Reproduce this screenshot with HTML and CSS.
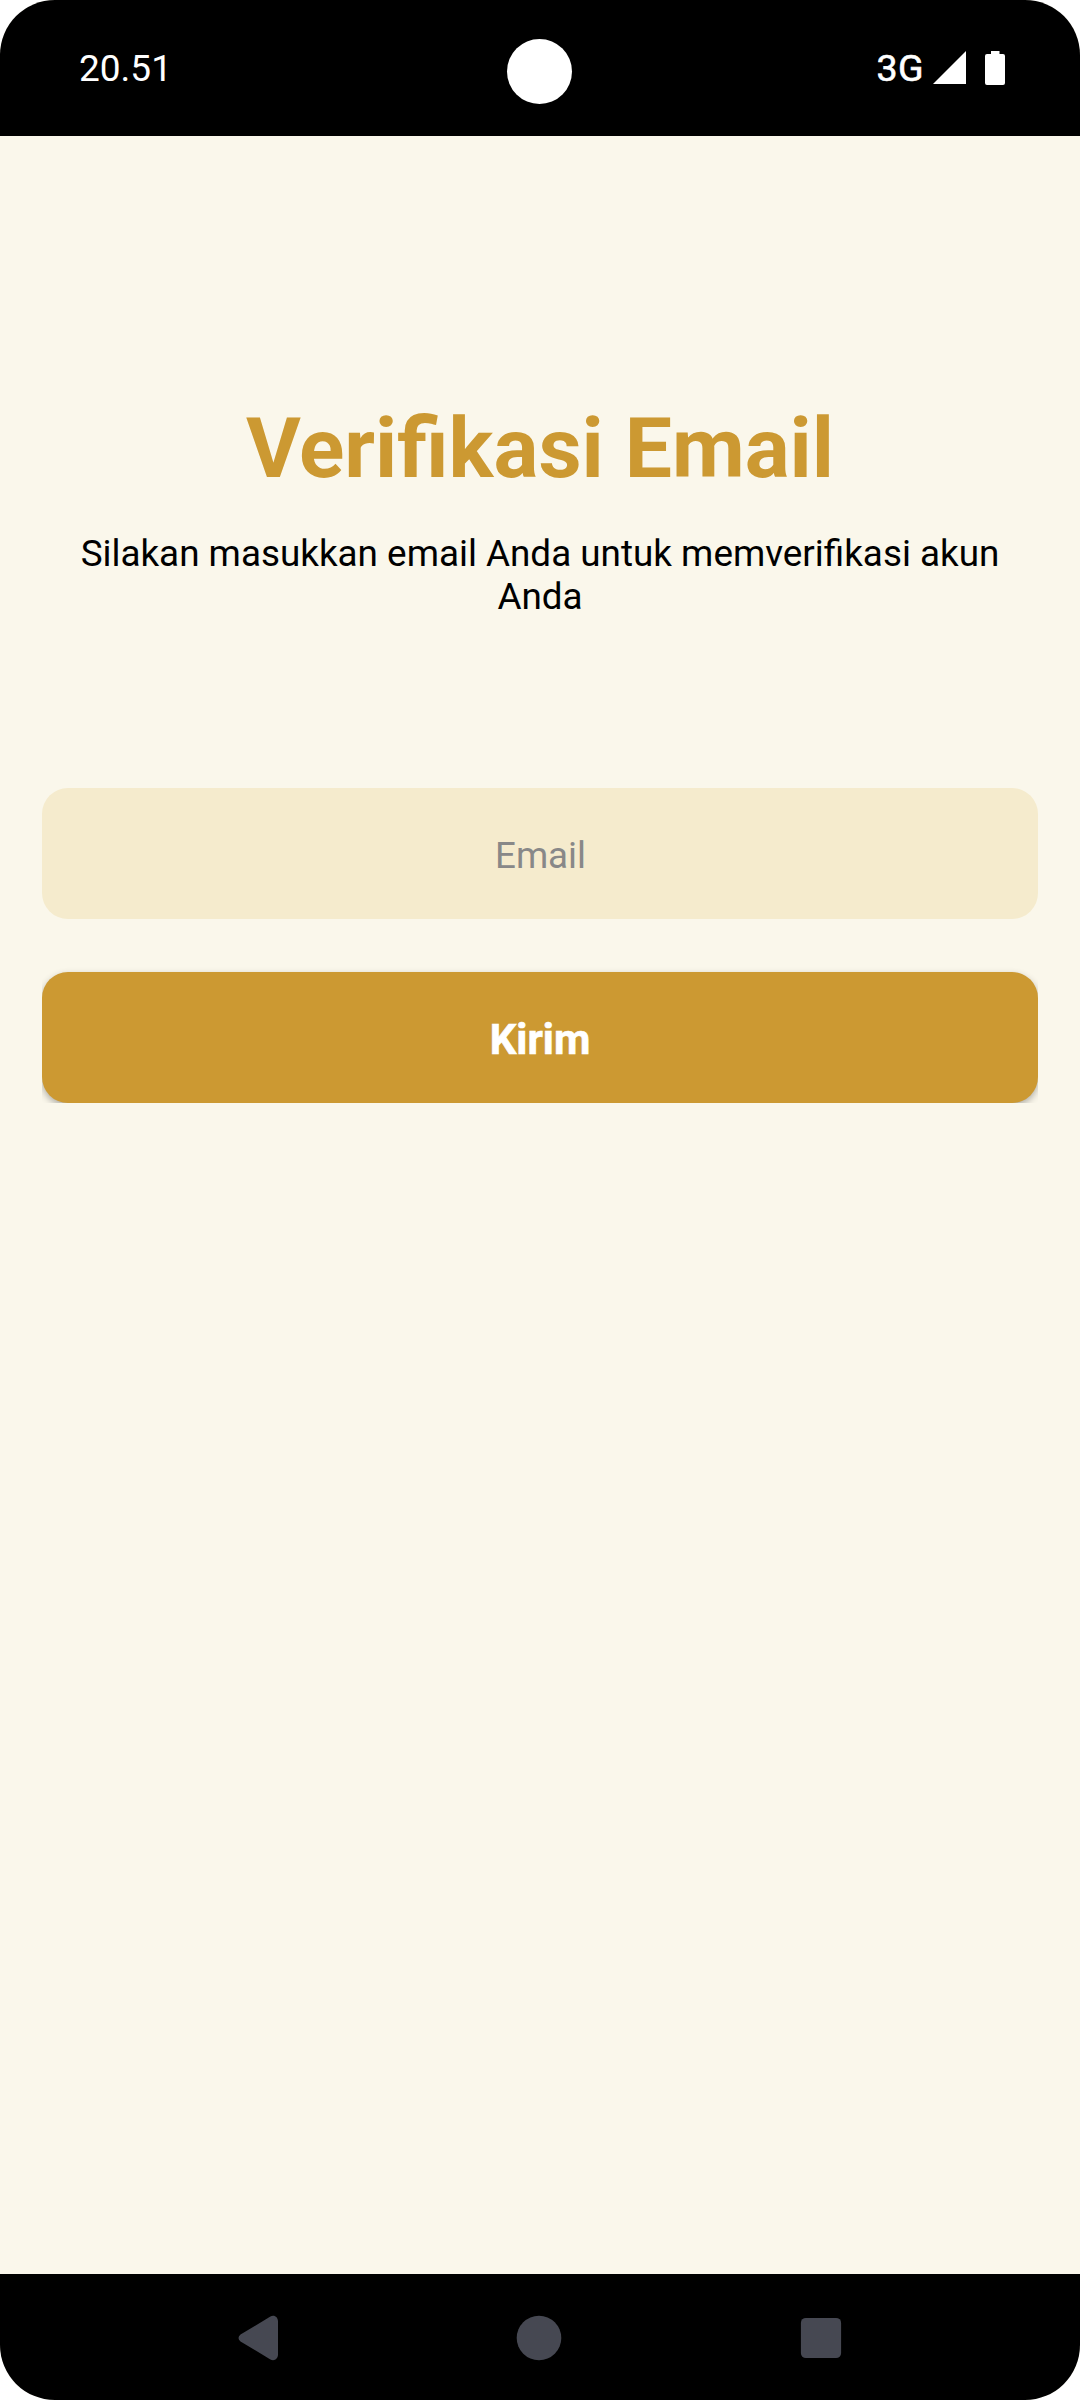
FILE: index.html
```html
<!DOCTYPE html>
<html lang="id">
<head>
<meta charset="utf-8">
<title>Verifikasi Email</title>
<link rel="stylesheet" href="styles.css">
</head>
<body>
<div class="device">
  <header class="status-bar">
    <span class="clock">20.51</span>
    <span class="camera"></span>
    <div class="indicators">
      <span class="network">3G</span>
      <svg class="signal" width="33" height="33" viewBox="0 0 33 33"><path d="M0 33L33 0V33Z" fill="#fff"/></svg>
      <svg class="battery" width="20" height="34" viewBox="0 0 20 34"><path d="M6 0H14.5V3H18Q20 3 20 5V32Q20 34 18 34H2Q0 34 0 32V5Q0 3 2 3H6Z" fill="#fff"/></svg>
    </div>
  </header>
  <main class="content">
    <h1 class="title">Verifikasi Email</h1>
    <p class="subtitle">Silakan masukkan email Anda untuk memverifikasi akun Anda</p>
    <form class="form">
      <input class="field" type="email" placeholder="Email">
      <button class="submit" type="button">Kirim</button>
    </form>
  </main>
  <nav class="nav-bar">
    <svg width="40" height="46" viewBox="0 0 40 46"><path d="M2.500 19.500L32 1.800C36 -.8 40 2 40 6.500V39.500C40 44 36 46.800 32 44.200L2.500 26.500Q-1.500 23 2.500 19.500Z" fill="#464852"/></svg>
    <svg width="46" height="46" viewBox="0 0 46 46"><circle cx="23" cy="23" r="22.300" fill="#464852"/></svg>
    <svg width="42" height="42" viewBox="0 0 42 42"><rect x=".9" y=".9" width="40.200" height="40.200" rx="5" fill="#464852"/></svg>
  </nav>
</div>
</body>
</html>
```
FILE: styles.css
```css
* { box-sizing: border-box; }

body {
  margin: 0;
  background: #fff;
  font-family: Roboto, sans-serif;
}

.device {
  display: flex;
  flex-direction: column;
  width: 1080px;
  height: 2400px;
  overflow: hidden;
  border-radius: 55px;
  background: #faf7eb;
}

.status-bar {
  display: grid;
  grid-template-columns: 428px 65px 1fr;
  height: 136px;
  padding: 0 75px 0 79px;
  background: #000;
  color: #fff;
}

.clock {
  margin-top: 47px;
  font-size: 37px;
  line-height: 44px;
}

.camera {
  width: 65px;
  height: 65px;
  margin-top: 39px;
  border-radius: 50%;
  background: #fff;
}

.indicators {
  display: flex;
  justify-content: flex-end;
  align-items: flex-start;
}

.network {
  margin-top: 46px;
  margin-right: 9px;
  font-size: 37.5px;
  font-weight: 400;
  line-height: 44px;
  letter-spacing: 0.4px;
  -webkit-text-stroke: 0.6px #fff;
}

.signal { margin-top: 51px; margin-right: 19px; }
.battery { margin-top: 51px; }

.content {
  flex: 1;
  padding: 263px 42px 0;
}

.title {
  margin: 0;
  color: #cc9932;
  font-size: 84px;
  font-weight: 700;
  line-height: 100px;
  text-align: center;
}

.subtitle {
  margin: 33px 0 0;
  color: #000;
  font-size: 36.85px;
  line-height: 43px;
  text-align: center;
}

.form {
  display: flex;
  flex-direction: column;
  gap: 53px;
  margin-top: 170px;
}

.field,
.submit {
  width: 100%;
  height: 131px;
  margin: 0;
  border: 0;
  border-radius: 26px;
  font-family: inherit;
  text-align: center;
}

.field {
  padding: 4px 0 0 1px;
  background: #f5ebcd;
  font-size: 36.75px;
}

.field::placeholder { color: #888; opacity: 1; }

.submit {
  padding: 4px 0 0;
  background: #cc9932;
  color: #fff;
  font-size: 42px;
  font-weight: 700;
  -webkit-text-stroke: 0.6px #fff;
  box-shadow: 0 3px 7px rgba(0, 0, 0, 0.3);
  clip-path: inset(-8px 0 0 0);
}

.nav-bar {
  display: flex;
  justify-content: space-between;
  align-items: center;
  height: 126px;
  padding: 1px 238px 0;
  background: #000;
}
```
